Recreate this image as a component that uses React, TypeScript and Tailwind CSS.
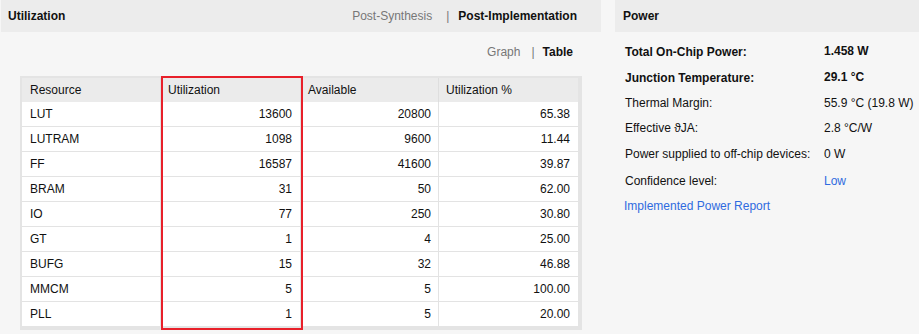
import React from "react";

const rows: [string, string, string, string][] = [
  ["LUT", "13600", "20800", "65.38"],
  ["LUTRAM", "1098", "9600", "11.44"],
  ["FF", "16587", "41600", "39.87"],
  ["BRAM", "31", "50", "62.00"],
  ["IO", "77", "250", "30.80"],
  ["GT", "1", "4", "25.00"],
  ["BUFG", "15", "32", "46.88"],
  ["MMCM", "5", "5", "100.00"],
  ["PLL", "1", "5", "20.00"],
];

const font = { fontFamily: '"Liberation Sans", Arial, sans-serif' };

export default function App() {
  return (
    <div
      className="w-[919px] h-[334px] bg-[#f6f6f6] flex text-[12px] text-[#111] overflow-hidden"
      style={font}
    >
      {/* Left panel */}
      <div className="ml-px w-[600px] flex flex-col">
        <div className="h-[32px] bg-[#ececec] flex items-center justify-between pl-[7px] pr-[24px]">
          <span className="font-bold">Utilization</span>
          <div className="flex items-center">
            <span className="text-[#777]">Post-Synthesis</span>
            <span className="text-[#777] ml-[14px] mr-[9px]">|</span>
            <span className="font-bold">Post-Implementation</span>
          </div>
        </div>
        <div className="h-[43px] flex items-center justify-end pr-[28px] pb-[3px]">
          <span className="text-[#777]">Graph</span>
          <span className="text-[#777] ml-[11px] mr-[8px]">|</span>
          <span className="font-bold">Table</span>
        </div>
        <div className="mt-px ml-[19px] relative w-[562px] border-t-2 border-l-2 border-r-4 border-b-4 border-[#e4e4e4]">
          <div className="flex h-[24px] bg-[#ebebeb]">
            <div className="w-[139px] border-r border-[#dedede] flex items-center pl-[8px]">Resource</div>
            <div className="w-[140px] border-r border-[#dedede] flex items-center pl-[7px]">Utilization</div>
            <div className="w-[138px] border-r border-[#dedede] flex items-center pl-[7px]">Available</div>
            <div className="w-[139px] flex items-center pl-[7px]">Utilization %</div>
          </div>
          {rows.map((r, i) => (
            <div
              key={r[0]}
              className={
                "flex bg-white " +
                (i < rows.length - 1 ? "h-[25px] border-b border-[#e3e3e3]" : "h-[24px]")
              }
            >
              <div className="w-[139px] border-r border-[#e3e3e3] flex items-center pl-[8px]">{r[0]}</div>
              <div className="w-[140px] border-r border-[#e3e3e3] flex items-center justify-end pr-[8px]">{r[1]}</div>
              <div className="w-[138px] border-r border-[#e3e3e3] flex items-center justify-end pr-[7px]">{r[2]}</div>
              <div className="w-[139px] flex items-center justify-end pr-[8px]">{r[3]}</div>
            </div>
          ))}
          <div className="absolute left-[139px] -top-[2px] w-[142px] h-[254px] border-2 border-[#e8202a] pointer-events-none" />
        </div>
      </div>

      {/* Right panel */}
      <div className="ml-[14px] flex-1 flex flex-col">
        <div className="h-[32px] bg-[#ececec] flex items-center pl-[8px]">
          <span className="font-bold">Power</span>
        </div>
        <div className="pt-[7px] pl-[10px] flex flex-col">
          <div className="h-[26px] flex items-center font-bold">
            <span className="w-[199px]">Total On-Chip Power:</span>
            <span className="-mt-[2px]">1.458 W</span>
          </div>
          <div className="h-[25px] flex items-center font-bold">
            <span className="w-[199px]">Junction Temperature:</span>
            <span className="-mt-[2px]">29.1 °C</span>
          </div>
          <div className="h-[25px] flex items-center">
            <span className="w-[199px]">Thermal Margin:</span>
            <span>55.9 °C (19.8 W)</span>
          </div>
          <div className="h-[26px] flex items-center">
            <span className="w-[199px]">Effective ϑJA:</span>
            <span>2.8 °C/W</span>
          </div>
          <div className="h-[26px] flex items-center">
            <span className="w-[199px]">Power supplied to off-chip devices:</span>
            <span>0 W</span>
          </div>
          <div className="h-[27px] flex items-center">
            <span className="w-[199px]">Confidence level:</span>
            <span className="text-[#2f6be0]">Low</span>
          </div>
          <div className="h-[24px] flex items-center -ml-[1px]">
            <span className="text-[#2f6be0]">Implemented Power Report</span>
          </div>
        </div>
      </div>
    </div>
  );
}
